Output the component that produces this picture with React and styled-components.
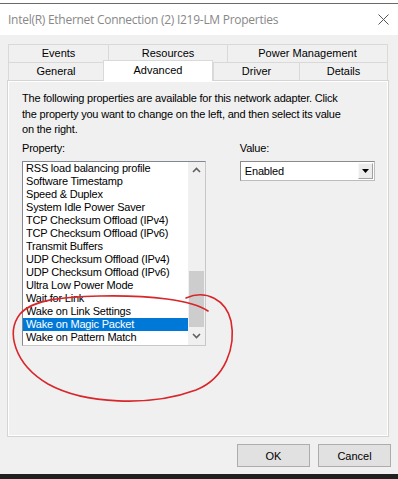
import React from "react";
import styled, { createGlobalStyle } from "styled-components";

const Global = createGlobalStyle`
  html, body { margin: 0; padding: 0; background: #f0f0f0; overflow: hidden; }
  * { box-sizing: border-box; }
`;

const Window = styled.div`
  position: relative;
  width: 398px;
  height: 479px;
  display: flex;
  flex-direction: column;
  background: #f0f0f0;
  font-family: "Liberation Sans", Arial, sans-serif;
  font-size: 11px;
  color: #000;
  overflow: hidden;
`;

const TopStrip = styled.div`
  height: 4px;
  background: #fff;
  border-bottom: 1px solid #6a6a6a;
`;

const TitleBar = styled.div`
  height: 31px;
  background: #fff;
  display: flex;
  align-items: center;
  justify-content: space-between;
  padding: 0 9px 0 8px;
`;

const Title = styled.div`
  font-family: "Open Sans", "Noto Sans", sans-serif;
  font-size: 12px;
  color: #888;
  letter-spacing: -0.27px;
`;

const Body = styled.div`
  flex: 1;
  display: flex;
  flex-direction: column;
  padding-top: 9px;
`;

const Tabs = styled.div`
  margin-left: 8px;
  width: 380px;
  display: flex;
  flex-direction: column;
`;

const TabRow = styled.div`
  display: flex;
  height: 18px;
  align-items: flex-end;
`;

const Tab = styled.div`
  width: ${(p) => p.$w}px;
  height: ${(p) => (p.$active ? 21 : 18)}px;
  margin-bottom: ${(p) => (p.$active ? -1 : 0)}px;
  position: relative;
  z-index: ${(p) => (p.$active ? 2 : 1)};
  background: ${(p) => (p.$active ? "#fff" : "#f0f0f0")};
  border-top: 1px solid #d9d9d9;
  border-left: 1px solid #d9d9d9;
  border-right: ${(p) => (p.$active ? "1px solid #d9d9d9" : "none")};
  display: flex;
  align-items: center;
  justify-content: center;
  padding-bottom: ${(p) => (p.$active ? 2 : 1)}px;
  &:last-child { border-right: 1px solid #d9d9d9; }
`;

const Panel = styled.div`
  margin: 0 9px 0 7px;
  height: 357px;
  border: 1px solid #d4d4d4;
  box-shadow: inset 1px 1px 0 #fff, inset -1px -1px 0 #fff;
  padding: 10px 13px 0 14px;
  display: flex;
  flex-direction: column;
`;

const Description = styled.p`
  margin: 0;
  line-height: 15.5px;
  letter-spacing: -0.2px;
`;

const Columns = styled.div`
  display: flex;
  gap: 34px;
  margin-top: 4px;
`;

const Column = styled.div`
  width: ${(p) => p.$w}px;
  display: flex;
  flex-direction: column;
`;

const Label = styled.div`
  line-height: 13px;
  height: 13px;
  margin-bottom: 6px;
  letter-spacing: -0.2px;
`;

const ListBox = styled.div`
  display: flex;
  height: 185px;
  background: #fff;
  border: 1px solid #828790;
  border-right-color: #c8c8c8;
  border-bottom-color: #c8c8c8;
`;

const Items = styled.div`
  flex: 1;
  display: flex;
  flex-direction: column;
`;

const Item = styled.div`
  height: 13px;
  line-height: 13px;
  padding-left: 3px;
  white-space: nowrap;
  letter-spacing: -0.2px;
  background: ${(p) => (p.$sel ? "#0078d7" : "transparent")};
  color: ${(p) => (p.$sel ? "#fff" : "#000")};
`;

const ScrollBar = styled.div`
  width: 17px;
  background: #f0f0f0;
  display: flex;
  flex-direction: column;
`;

const ArrowBtn = styled.div`
  height: 17px;
  display: flex;
  align-items: center;
  justify-content: center;
`;

const Track = styled.div`
  flex: 1;
  padding-top: ${(p) => p.$offset}px;
  display: flex;
  justify-content: center;
`;

const Thumb = styled.div`
  width: 15px;
  height: ${(p) => p.$h}px;
  background: #cdcdcd;
`;

const Combo = styled.div`
  height: 20px;
  background: #fff;
  border: 1px solid #8a8a8a;
  border-right-color: #bcbcbc;
  border-bottom-color: #bcbcbc;
  display: flex;
  align-items: center;
  justify-content: space-between;
  padding: 0 1px 0 4px;
`;

const ComboText = styled.span`
  letter-spacing: -0.2px;
`;

const DropBtn = styled.div`
  width: 15px;
  height: 16px;
  background: #ececec;
  border: 1px solid #f8f8f8;
  border-right-color: #a0a0a0;
  border-bottom-color: #a0a0a0;
  display: flex;
  align-items: center;
  justify-content: center;
`;

const ButtonRow = styled.div`
  display: flex;
  justify-content: flex-end;
  gap: 8px;
  padding-right: 7px;
  margin-top: 7px;
`;

const Button = styled.div`
  width: 73px;
  height: 23px;
  background: #e1e1e1;
  border: 1px solid #adadad;
  display: flex;
  align-items: center;
  justify-content: center;
`;

const Taskbar = styled.div`
  height: 5px;
  background: #202020;
`;

const Annotation = styled.svg`
  position: absolute;
  left: 0;
  top: 0;
  pointer-events: none;
`;

const items = [
  "RSS load balancing profile",
  "Software Timestamp",
  "Speed & Duplex",
  "System Idle Power Saver",
  "TCP Checksum Offload (IPv4)",
  "TCP Checksum Offload (IPv6)",
  "Transmit Buffers",
  "UDP Checksum Offload (IPv4)",
  "UDP Checksum Offload (IPv6)",
  "Ultra Low Power Mode",
  "Wait for Link",
  "Wake on Link Settings",
  "Wake on Magic Packet",
  "Wake on Pattern Match",
];

export default function App() {
  return (
    <Window>
      <Global />
      <TopStrip />
      <TitleBar>
        <Title>Intel(R) Ethernet Connection (2) I219-LM Properties</Title>
        <svg width="11" height="11" viewBox="0 0 11 11">
          <path d="M0.5 0.5 L10.5 10.5 M10.5 0.5 L0.5 10.5" stroke="#555" strokeWidth="1" fill="none" />
        </svg>
      </TitleBar>
      <Body>
        <Tabs>
          <TabRow>
            <Tab $w={100}>Events</Tab>
            <Tab $w={119}>Resources</Tab>
            <Tab $w={161}>Power Management</Tab>
          </TabRow>
          <TabRow>
            <Tab $w={95}>General</Tab>
            <Tab $w={110} $active>Advanced</Tab>
            <Tab $w={86}>Driver</Tab>
            <Tab $w={89}>Details</Tab>
          </TabRow>
        </Tabs>
        <Panel>
          <Description>
            The following properties are available for this network adapter. Click
            <br />
            the property you want to change on the left, and then select its value
            <br />
            on the right.
          </Description>
          <Columns>
            <Column $w={185}>
              <Label>Property:</Label>
              <ListBox>
                <Items>
                  {items.map((t) => (
                    <Item key={t} $sel={t === "Wake on Magic Packet"}>{t}</Item>
                  ))}
                </Items>
                <ScrollBar>
                  <ArrowBtn>
                    <svg width="9" height="6" viewBox="0 0 9 6">
                      <path d="M1 5 L4.5 1.5 L8 5" stroke="#606060" strokeWidth="1.6" fill="none" />
                    </svg>
                  </ArrowBtn>
                  <Track $offset={92}>
                    <Thumb $h={56} />
                  </Track>
                  <ArrowBtn>
                    <svg width="9" height="6" viewBox="0 0 9 6">
                      <path d="M1 1 L4.5 4.5 L8 1" stroke="#606060" strokeWidth="1.6" fill="none" />
                    </svg>
                  </ArrowBtn>
                </ScrollBar>
              </ListBox>
            </Column>
            <Column $w={136}>
              <Label>Value:</Label>
              <Combo>
                <ComboText>Enabled</ComboText>
                <DropBtn>
                  <svg width="7" height="4" viewBox="0 0 7 4">
                    <path d="M0 0 H7 L3.5 4 Z" fill="#000" />
                  </svg>
                </DropBtn>
              </Combo>
            </Column>
          </Columns>
        </Panel>
        <ButtonRow>
          <Button>OK</Button>
          <Button>Cancel</Button>
        </ButtonRow>
      </Body>
      <Taskbar />
      <Annotation width="398" height="479" viewBox="0 0 398 479">
        <path
          d="M208 311 C192 300 150 295 100 296 C60 297 32 300 20 314 C6 332 14 364 48 384 C84 404 150 407 196 390 C226 378 236 346 231 321 C226 300 206 289 186 298"
          stroke="#d8262a"
          strokeWidth="1.6"
          fill="none"
          strokeLinecap="round"
        />
      </Annotation>
    </Window>
  );
}
